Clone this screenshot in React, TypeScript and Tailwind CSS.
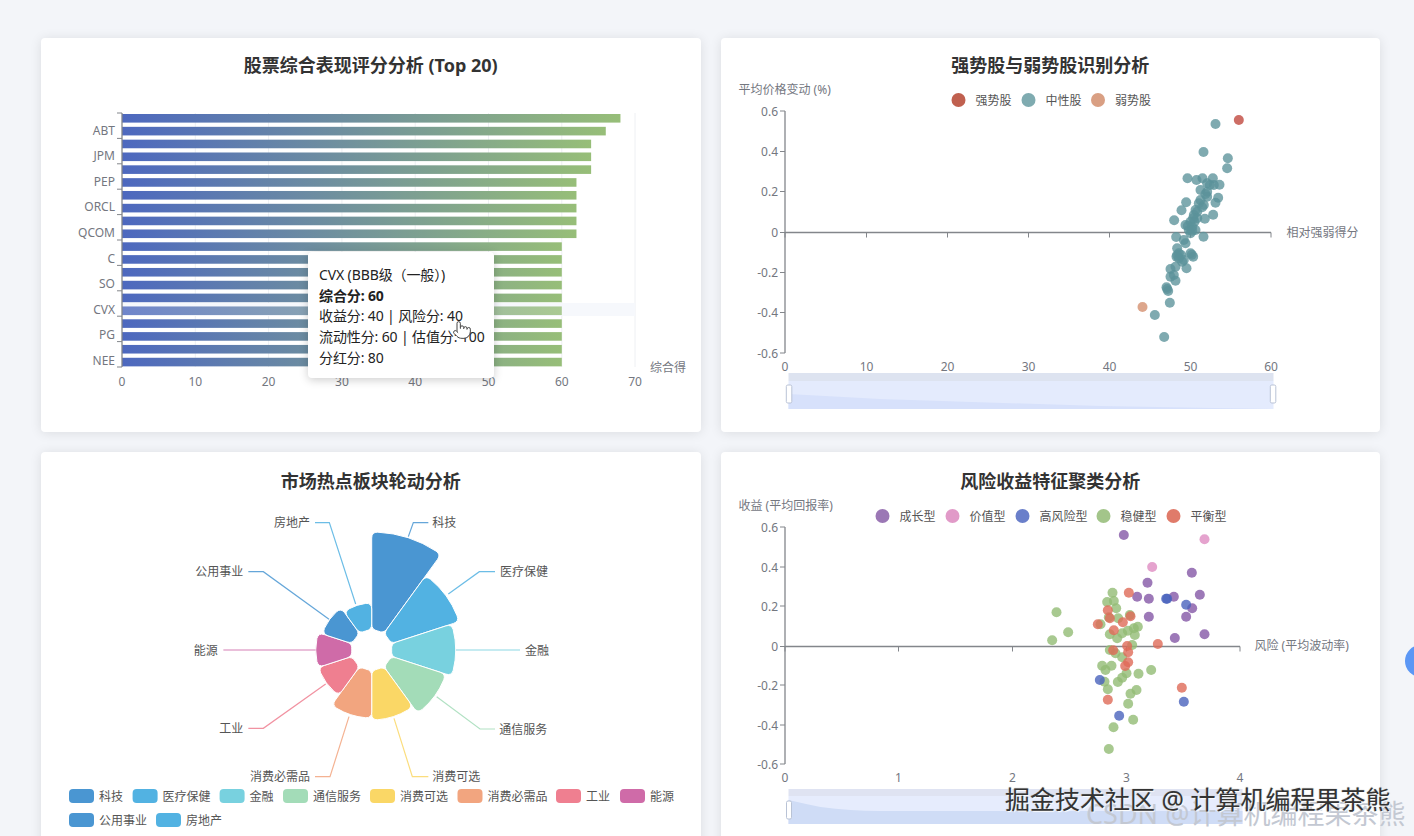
import { Pointer } from "lucide-react";
import type { ReactNode } from "react";

const AXIS = "#74777f";
const LINE = "#83868b";

// points read off the reference in crop coordinates: x = ox + zx / 3, y = oy + zy / 3
type Pt = [number, number];

const strongPts: Pt[] = [[565, 90]];
const weakPts: Pt[] = [[276, 651]];
const neutralPts: Pt[] = [
  [495, 102], [459, 186], [532, 205], [530, 235], [411, 265], [438, 270], [456, 265], [487, 265],
  [470, 280], [490, 285], [507, 284], [450, 300], [470, 305], [503, 323], [495, 338], [470, 320],
  [445, 340], [460, 345], [407, 337], [393, 361], [435, 360], [430, 375], [488, 374], [463, 386],
  [371, 391], [440, 385], [420, 395], [405, 405], [425, 410], [415, 420], [435, 420], [420, 430],
  [459, 440], [377, 441], [400, 450], [405, 460], [380, 475], [385, 490], [420, 490], [428, 500],
  [385, 505], [395, 515], [408, 535], [360, 537], [375, 530], [370, 555], [360, 560], [375, 572],
  [348, 592], [353, 603], [358, 638], [313, 675], [341, 741], [450, 330], [432, 395], [378, 500],
  [478, 285], [465, 312], [455, 352], [440, 365], [428, 385], [412, 408], [425, 422], [392, 495],
  [400, 510], [380, 495], [424, 494], [350, 597],
];

const growthPts: Pt[] = [
  [310, 45], [514, 158], [381, 188], [350, 230], [385, 236], [460, 230], [538, 224], [515, 265],
  [497, 290], [385, 290], [463, 354], [552, 343],
];
const valuePts: Pt[] = [[552, 58], [395, 141]];
const riskPts: Pt[] = [[440, 236], [437, 236], [497, 254], [490, 545], [296, 587], [238, 480]];
const stablePts: Pt[] = [
  [276, 218], [260, 246], [280, 243], [287, 265], [108, 277], [143, 337], [95, 361], [265, 292],
  [328, 285], [293, 295], [352, 320], [340, 325], [322, 332], [305, 340], [290, 355], [268, 343],
  [343, 345], [335, 375], [268, 390], [285, 400], [305, 412], [245, 437], [255, 450], [273, 437],
  [392, 450], [354, 461], [318, 460], [305, 473], [292, 486], [252, 485], [262, 508], [348, 510],
  [330, 521], [323, 551], [338, 599], [279, 622], [265, 687], [240, 313],
];
const balancedPts: Pt[] = [
  [325, 218], [262, 271], [268, 295], [330, 289], [232, 313], [307, 307], [280, 331], [412, 372],
  [320, 378], [278, 391], [323, 397], [323, 427], [314, 438], [262, 539], [484, 503],
];

const barValues = [68, 66, 64, 64, 64, 62, 62, 62, 62, 62, 60, 60, 60, 60, 60, 60, 60, 60, 60, 60];
const barLabels = ["ABT", "JPM", "PEP", "ORCL", "QCOM", "C", "SO", "CVX", "PG", "NEE"];

const sectors = [
  { name: "科技", color: "#4a96d2", r: 118 },
  { name: "医疗保健", color: "#52b2e2", r: 92 },
  { name: "金融", color: "#78d1df", r: 84 },
  { name: "通信服务", color: "#a3dcb8", r: 78 },
  { name: "消费可选", color: "#fad766", r: 70 },
  { name: "消费必需品", color: "#f2a57f", r: 68 },
  { name: "工业", color: "#ef7f90", r: 56 },
  { name: "能源", color: "#cf6ba8", r: 56 },
  { name: "公用事业", color: "#4a96d2", r: 52 },
  { name: "房地产", color: "#52b2e2", r: 47 },
];

// leader lines, crop coordinates of the pie zoom (x = 180 + z / 3, y = 500 + z / 3)
const leaders: { line: Pt[]; tx: number; ty: number; end?: boolean }[] = [
  { line: [[685, 110], [700, 68], [745, 68]], tx: 757, ty: 68 },
  { line: [[805, 282], [898, 215], [945, 215]], tx: 960, ty: 215 },
  { line: [[828, 450], [1020, 450]], tx: 1035, ty: 450 },
  { line: [[770, 590], [900, 687], [945, 687]], tx: 958, ty: 687 },
  { line: [[642, 655], [697, 830], [745, 830]], tx: 757, ty: 830 },
  { line: [[507, 650], [450, 830], [405, 830]], tx: 390, ty: 830, end: true },
  { line: [[437, 552], [250, 685], [205, 685]], tx: 190, ty: 685, end: true },
  { line: [[407, 450], [130, 450]], tx: 113, ty: 450, end: true },
  { line: [[447, 358], [250, 215], [205, 215]], tx: 190, ty: 215, end: true },
  { line: [[527, 312], [448, 68], [405, 68]], tx: 390, ty: 68, end: true },
];

const pieLegend = [
  { name: "科技", color: "#4a96d2", x: 69, y: 789 },
  { name: "医疗保健", color: "#52b2e2", x: 132.6, y: 789 },
  { name: "金融", color: "#78d1df", x: 219.6, y: 789 },
  { name: "通信服务", color: "#a3dcb8", x: 283, y: 789 },
  { name: "消费可选", color: "#fad766", x: 370, y: 789 },
  { name: "消费必需品", color: "#f2a57f", x: 457.5, y: 789 },
  { name: "工业", color: "#ef7f90", x: 556, y: 789 },
  { name: "能源", color: "#cf6ba8", x: 620, y: 789 },
  { name: "公用事业", color: "#4a96d2", x: 69, y: 813 },
  { name: "房地产", color: "#52b2e2", x: 156, y: 813 },
];

function sectorPath(cx: number, cy: number, r0: number, r1: number, a0: number, a1: number, c: number) {
  const p = (r: number, a: number) => `${(cx + r * Math.sin(a)).toFixed(2)} ${(cy - r * Math.cos(a)).toFixed(2)}`;
  return [
    `M${p(r0 + c, a0)}`,
    `L${p(r1 - c, a0)}`,
    `Q${p(r1, a0)} ${p(r1, a0 + c / r1)}`,
    `A${r1} ${r1} 0 0 1 ${p(r1, a1 - c / r1)}`,
    `Q${p(r1, a1)} ${p(r1 - c, a1)}`,
    `L${p(r0 + c, a1)}`,
    `Q${p(r0, a1)} ${p(r0, a1 - c / r0)}`,
    `A${r0} ${r0} 0 0 0 ${p(r0, a0 + c / r0)}`,
    `Q${p(r0, a0)} ${p(r0 + c, a0)}`,
    "Z",
  ].join(" ");
}

function Label(props: { x: number; y: number; children: ReactNode; anchor?: "start" | "middle" | "end"; fill?: string }) {
  return (
    <text
      x={props.x}
      y={props.y}
      textAnchor={props.anchor ?? "start"}
      dominantBaseline="central"
      fontSize={12}
      fill={props.fill ?? AXIS}
    >
      {props.children}
    </text>
  );
}

function Dots(props: { pts: Pt[]; ox: number; oy: number; color: string; opacity?: number }) {
  return (
    <g fill={props.color} fillOpacity={props.opacity ?? 0.8}>
      {props.pts.map(([zx, zy], i) => (
        <circle key={i} cx={props.ox + zx / 3} cy={props.oy + zy / 3} r={5} />
      ))}
    </g>
  );
}

function Axes(props: {
  xTicks: { x: number; label: string }[];
  yTicks: { y: number; label: string }[];
  axisX: number;
  axisY: number;
}) {
  const { xTicks, yTicks, axisX, axisY } = props;
  const last = xTicks[xTicks.length - 1].x;
  const top = yTicks[0].y;
  const bottom = yTicks[yTicks.length - 1].y;
  return (
    <g>
      <line x1={axisX} y1={top} x2={axisX} y2={bottom} stroke={LINE} strokeWidth={1.3} />
      <line x1={axisX} y1={axisY} x2={last} y2={axisY} stroke={LINE} strokeWidth={1.3} />
      {yTicks.map((t) => (
        <g key={t.label}>
          <line x1={axisX - 5} y1={t.y} x2={axisX} y2={t.y} stroke={LINE} />
          <Label x={axisX - 7} y={t.y} anchor="end">
            {t.label}
          </Label>
        </g>
      ))}
      {xTicks.map((t) => (
        <g key={t.label}>
          <line x1={t.x} y1={axisY} x2={t.x} y2={axisY + 5} stroke={LINE} />
          <Label x={t.x} y={bottom + 13} anchor="middle">
            {t.label}
          </Label>
        </g>
      ))}
    </g>
  );
}

function Card(props: { title: string; viewBox: string; height: string; titleClass: string; children: ReactNode }) {
  return (
    <div className="relative rounded bg-white shadow-[0_1px_12px_rgba(0,0,0,0.1)]">
      <h3 className={`h-[44px] text-center text-lg font-bold text-[#333] ${props.titleClass}`}>{props.title}</h3>
      <svg viewBox={props.viewBox} className={`block w-full ${props.height}`}>
        {props.children}
      </svg>
    </div>
  );
}

function BarChart() {
  return (
    <>
      <defs>
        <linearGradient id="barFill">
          <stop offset="0" stopColor="#4d68bf" />
          <stop offset="1" stopColor="#97be78" />
        </linearGradient>
      </defs>
      {[195.3, 268.6, 341.9, 415.2, 488.5, 561.8, 635].map((x) => (
        <line key={x} x1={x} y1={113} x2={x} y2={367} stroke="#eef0f3" />
      ))}
      <rect x={122} y={303} width={513} height={13} fill="#f6f8fc" />
      {barValues.map((v, i) => (
        <rect
          key={i}
          x={122}
          y={114 + i * 12.83}
          width={v * 7.33}
          height={8.6}
          fill="url(#barFill)"
          opacity={i === 15 ? 0.8 : 1}
        />
      ))}
      <line x1={122} y1={113} x2={122} y2={367} stroke={LINE} strokeWidth={1.3} />
      {Array.from({ length: 11 }).map((_, i) => (
        <line key={i} x1={117} y1={113 + i * 25.4} x2={122} y2={113 + i * 25.4} stroke={LINE} />
      ))}
      {barLabels.map((l, i) => (
        <Label key={l} x={115} y={130 + i * 25.6} anchor="end">
          {l}
        </Label>
      ))}
      {[0, 10, 20, 30, 40, 50, 60, 70].map((v) => (
        <Label key={v} x={122 + v * 7.33} y={381} anchor="middle">
          {v}
        </Label>
      ))}
      <Label x={650} y={367}>
        综合得
      </Label>
    </>
  );
}

function StrengthChart() {
  const xs = [784.5, 866, 947, 1028, 1109, 1190, 1270.5];
  const ys = [111, 151.5, 191.5, 232.5, 272.5, 312.5, 353];
  return (
    <>
      <Label x={738} y={89}>
        平均价格变动 (%)
      </Label>
      {[
        { x: 958, name: "强势股", color: "#c0604f" },
        { x: 1028, name: "中性股", color: "#7fabb0" },
        { x: 1097.5, name: "弱势股", color: "#d99f83" },
      ].map((l) => (
        <g key={l.name}>
          <circle cx={l.x} cy={100} r={7} fill={l.color} />
          <Label x={l.x + 17} y={100} fill="#555">
            {l.name}
          </Label>
        </g>
      ))}
      <Axes
        axisX={784.5}
        axisY={232.5}
        xTicks={xs.map((x, i) => ({ x, label: String(i * 10) }))}
        yTicks={ys.map((y, i) => ({ y, label: ["0.6", "0.4", "0.2", "0", "-0.2", "-0.4", "-0.6"][i] }))}
      />
      <Label x={1286} y={232}>
        相对强弱得分
      </Label>
      <Dots pts={neutralPts} ox={1050} oy={90} color="#5b929a" opacity={0.78} />
      <Dots pts={strongPts} ox={1050} oy={90} color="#c0493f" />
      <Dots pts={weakPts} ox={1050} oy={90} color="#d5906f" />
      <rect x={788} y={373} width={485} height={8} fill="#dde3f0" />
      <rect x={788} y={381} width={485} height={28} fill="#e4ebfd" />
      <path d="M788 394 L880 399 L1100 406 L1273 409 L788 409 Z" fill="#d7e1fb" />
      <rect x={785.8} y={385} width={5.5} height={18} rx={1.5} fill="#fff" stroke="#b9c3d6" />
      <rect x={1269.8} y={385} width={5.5} height={18} rx={1.5} fill="#fff" stroke="#b9c3d6" />
    </>
  );
}

function PieChart() {
  const cx = 371.7;
  const cy = 650;
  const step = (Math.PI * 2) / 10;
  return (
    <>
      {sectors.map((s, i) => (
        <path
          key={s.name}
          d={sectorPath(cx, cy, 20, s.r, i * step, (i + 1) * step, 6)}
          fill={s.color}
          stroke="#fff"
          strokeWidth={1}
        />
      ))}
      {leaders.map((l, i) => (
        <g key={i}>
          <polyline
            points={l.line.map(([x, y]) => `${180 + x / 3},${500 + y / 3}`).join(" ")}
            fill="none"
            stroke={sectors[i].color}
            strokeWidth={1.2}
            strokeOpacity={0.85}
          />
          <Label x={180 + l.tx / 3} y={500 + l.ty / 3} anchor={l.end ? "end" : "start"} fill="#555">
            {sectors[i].name}
          </Label>
        </g>
      ))}
      {pieLegend.map((l) => (
        <g key={l.name}>
          <rect x={l.x} y={l.y} width={25} height={14} rx={4} fill={l.color} />
          <Label x={l.x + 30} y={l.y + 7} fill="#555">
            {l.name}
          </Label>
        </g>
      ))}
    </>
  );
}

function ClusterChart() {
  const xs = [784.5, 898, 1012, 1126, 1239.5];
  const ys = [527, 567, 606, 646.5, 685, 725, 764];
  return (
    <>
      <Label x={738} y={505}>
        收益 (平均回报率)
      </Label>
      {[
        { x: 882, name: "成长型", color: "#9b77b5" },
        { x: 952, name: "价值型", color: "#e19ac8" },
        { x: 1022, name: "高风险型", color: "#6a7fca" },
        { x: 1103, name: "稳健型", color: "#a3c58a" },
        { x: 1173, name: "平衡型", color: "#e07b6a" },
      ].map((l) => (
        <g key={l.name}>
          <circle cx={l.x} cy={516} r={7} fill={l.color} />
          <Label x={l.x + 17} y={516} fill="#555">
            {l.name}
          </Label>
        </g>
      ))}
      <Axes
        axisX={784.5}
        axisY={646.5}
        xTicks={xs.map((x, i) => ({ x, label: String(i) }))}
        yTicks={ys.map((y, i) => ({ y, label: ["0.6", "0.4", "0.2", "0", "-0.2", "-0.4", "-0.6"][i] }))}
      />
      <Label x={1254} y={645}>
        风险 (平均波动率)
      </Label>
      <Dots pts={stablePts} ox={1020} oy={520} color="#92bc74" />
      <Dots pts={growthPts} ox={1020} oy={520} color="#8558a6" />
      <Dots pts={valuePts} ox={1020} oy={520} color="#df8cc2" />
      <Dots pts={riskPts} ox={1020} oy={520} color="#4a63bd" />
      <Dots pts={balancedPts} ox={1020} oy={520} color="#de6a57" />
      <rect x={788} y={789} width={454} height={7} fill="#dfe3f2" />
      <rect x={788} y={796} width={454} height={28} fill="#e6ecfd" />
      <path d="M788 800 Q805 804 820 807 Q850 811 880 811 L1242 811 L1242 824 L788 824 Z" fill="#cfdcf6" />
      <rect x={786} y={801} width={5} height={18} rx={1.5} fill="#fff" stroke="#b9c3d6" />
    </>
  );
}

export default function App() {
  return (
    <div className="relative h-[836px] w-full overflow-hidden bg-[#f3f5f9] font-['Noto_Sans','Noto_Sans_CJK_SC',sans-serif]">
      <div className="grid grid-cols-2 gap-x-5 gap-y-5 pl-[41px] pr-[34px] pt-[38px]">
        <div className="relative">
          <Card title="股票综合表现评分分析 (Top 20)" viewBox="41 82 659.5 350" height="h-[350px]" titleClass="pt-[13px]">
            <BarChart />
          </Card>
          {/* tooltip + cursor sit over the bars */}
          <div className="absolute left-[267px] top-[214px] h-[126px] w-[186px] rounded bg-white px-[11px] pt-[13px] text-sm leading-[20.7px] tracking-[-0.12px] text-[#222] shadow-[0_2px_10px_rgba(0,0,0,0.2)]">
            <div className="whitespace-nowrap">CVX (BBB级（一般）)</div>
            <div className="whitespace-nowrap font-bold">综合分: 60</div>
            <div className="whitespace-nowrap">收益分: 40 | 风险分: 40</div>
            <div className="whitespace-nowrap">流动性分: 60 | 估值分: 100</div>
            <div className="whitespace-nowrap">分红分: 80</div>
          </div>
          <Pointer
            size={20}
            strokeWidth={1.2}
            className="absolute left-[411px] top-[282px] fill-white text-[#444]"
          />
        </div>
        <Card title="强势股与弱势股识别分析" viewBox="720.5 82 659.5 350" height="h-[350px]" titleClass="pt-[13px]">
          <StrengthChart />
        </Card>
        <Card title="市场热点板块轮动分析" viewBox="41 496 659.5 428" height="h-[428px]" titleClass="pt-[15px]">
          <PieChart />
        </Card>
        <Card title="风险收益特征聚类分析" viewBox="720.5 496 659.5 428" height="h-[428px]" titleClass="pt-[15px]">
          <ClusterChart />
        </Card>
      </div>

      {/* blue floating button cut off by the window edge */}
      <div className="absolute left-[1405px] top-[645px] h-8 w-8 rounded-full bg-[#5b97f5]" />

      {/* image watermarks */}
      <div className="absolute left-[1086px] top-[796px] whitespace-nowrap text-[27px] leading-[36px] text-[#c3c8d2]">
        CSDN @计算机编程果茶熊
      </div>
      <div className="absolute left-[1005px] top-[783px] whitespace-nowrap text-[25px] leading-[32px] text-[#333] [text-shadow:0_0_2px_#fff,1px_1px_1px_#fff,0_0_1px_#333]">
        掘金技术社区 @ 计算机编程果茶熊
      </div>
    </div>
  );
}
